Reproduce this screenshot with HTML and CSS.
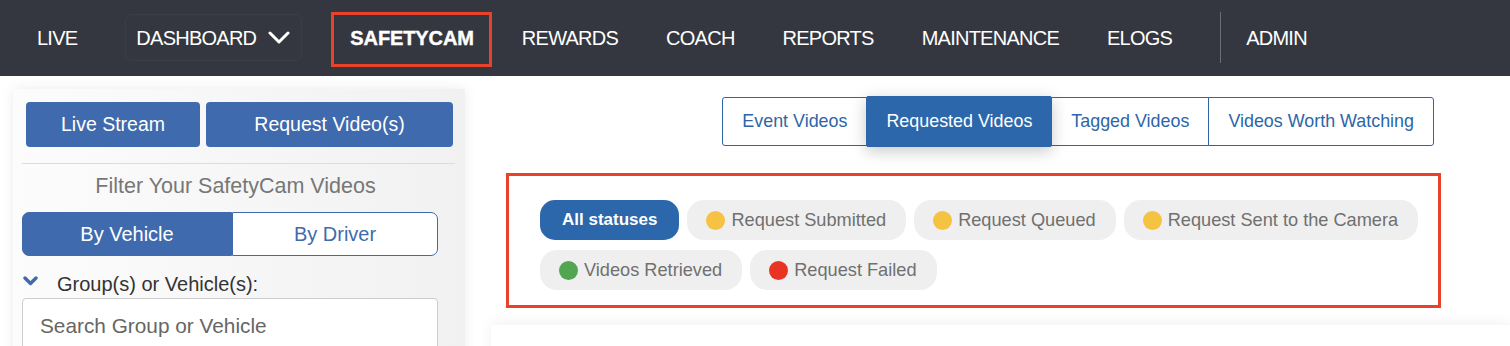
FILE: index.html
```html
<!DOCTYPE html>
<html lang="en">
<head>
  <meta charset="UTF-8" />
  <meta name="viewport" content="width=device-width, initial-scale=1.0"/>
  <title>SafetyCam - Requested Videos</title>
  <link rel="stylesheet" href="styles.css">
</head>
<body>

  <header class="topnav">
    <a class="nav-item">LIVE</a>
    <div class="nav-item nav-dropdown">
      DASHBOARD
      <svg class="nav-caret" width="22" height="13" viewBox="0 0 22 13">
        <path d="M2 2 L11 11 L20 2" fill="none" stroke="#fff" stroke-width="3" stroke-linecap="round" stroke-linejoin="round"/>
      </svg>
    </div>
    <a class="nav-item nav-active"><span class="highlight">SAFETYCAM</span></a>
    <a class="nav-item">REWARDS</a>
    <a class="nav-item">COACH</a>
    <a class="nav-item">REPORTS</a>
    <a class="nav-item">MAINTENANCE</a>
    <a class="nav-item">ELOGS</a>
    <span class="nav-divider"></span>
    <a class="nav-item">ADMIN</a>
  </header>

  <div class="layout">
    <aside class="sidebar">
      <div class="sidebar-actions">
        <button class="btn btn-live">Live Stream</button>
        <button class="btn btn-request">Request Video(s)</button>
      </div>
      <hr class="sidebar-rule">
      <h2 class="filter-title">Filter Your SafetyCam Videos</h2>
      <div class="toggle">
        <button class="toggle-opt active">By Vehicle</button>
        <button class="toggle-opt">By Driver</button>
      </div>
      <div class="field-label">
        <svg class="field-caret" width="15" height="10" viewBox="0 0 15 10">
          <path d="M2 2 L7.5 7.5 L13 2" fill="none" stroke="#3f6aad" stroke-width="3.4" stroke-linecap="round" stroke-linejoin="round"/>
        </svg>
        Group(s) or Vehicle(s):
      </div>
      <input type="text" class="search" placeholder="Search Group or Vehicle">
    </aside>

    <main class="content">
      <nav class="video-tabs">
        <a class="tab tab-first">Event Videos</a>
        <a class="tab active">Requested Videos</a>
        <a class="tab">Tagged Videos</a>
        <a class="tab tab-last">Videos Worth Watching</a>
      </nav>

      <section class="status-filter">
        <div class="chip-row">
          <button class="chip chip-all">All statuses</button>
          <button class="chip"><span class="dot dot-yellow"></span>Request Submitted</button>
          <button class="chip"><span class="dot dot-yellow"></span>Request Queued</button>
          <button class="chip"><span class="dot dot-yellow"></span>Request Sent to the Camera</button>
        </div>
        <div class="chip-row">
          <button class="chip"><span class="dot dot-green"></span>Videos Retrieved</button>
          <button class="chip"><span class="dot dot-red"></span>Request Failed</button>
        </div>
      </section>

      <div class="results-card"></div>
    </main>
  </div>

</body>
</html>
```

FILE: styles.css
```css
* {
  box-sizing: border-box;
}

html, body {
  overflow: hidden;
}

body {
  margin: 0;
  padding: 0;
  font-family: 'Liberation Sans', Arial, sans-serif;
  background: #fff;
}

button {
  font-family: inherit;
  cursor: pointer;
}

/* top navigation */
.topnav {
  display: flex;
  align-items: center;
  gap: 48px;
  height: 76px;
  padding-left: 37px;
  background: #353740;
}

.nav-item {
  color: #fff;
  font-size: 20px;
  letter-spacing: -0.75px;
  line-height: 24px;
  text-decoration: none;
}

.nav-dropdown {
  display: flex;
  align-items: center;
  gap: 12px;
  height: 47px;
  padding: 0 11px 0 10px;
  border: 1px solid rgba(255,255,255,0.035);
  border-radius: 7px;
  margin-top: -1px;
}

.nav-active {
  font-weight: bold;
  letter-spacing: -0.1px;
  -webkit-text-stroke: 0.4px #fff;
}

.highlight {
  position: relative;
  display: inline-block;
}

.highlight::after {
  content: "";
  position: absolute;
  top: -14px;
  bottom: -17px;
  left: -19px;
  right: -18px;
  border: 3px solid #e8422b;
}

.nav-divider {
  width: 1px;
  height: 51px;
  background: #6c6e75;
  margin-right: -23px;
  margin-top: -1px;
}

/* layout */
.layout {
  display: flex;
  align-items: flex-start;
}

.sidebar {
  flex-shrink: 0;
  width: 452px;
  min-height: 300px;
  margin: 13px 0 0 13px;
  padding: 13px 10px 0 9px;
  background: linear-gradient(90deg, #fcfcfc, #f1f1f1);
  box-shadow: 0 0 12px rgba(0,0,0,0.08);
}

.sidebar-actions {
  display: flex;
  gap: 6px;
  margin: 0 2px 0 4px;
}

.btn {
  height: 45px;
  border: none;
  border-radius: 4px;
  background: #3f6aad;
  color: #fff;
  font-size: 19.5px;
}

.btn-live {
  width: 174px;
}

.btn-request {
  flex: 1;
}

.sidebar-rule {
  border: none;
  border-top: 1px solid #dcdcdc;
  margin: 16px 0 0;
}

.filter-title {
  margin: 10px 0 0;
  text-align: center;
  font-size: 21.5px;
  font-weight: normal;
  line-height: 24px;
  color: #777;
  padding-right: 6px;
}

.toggle {
  display: flex;
  height: 44px;
  margin: 14px 17px 0 0;
}

.toggle-opt {
  flex: 1;
  border: 1px solid #3f6aad;
  background: #fff;
  color: #3f6aad;
  font-size: 20px;
  border-radius: 0 7px 7px 0;
}

.toggle-opt.active {
  flex: 0 0 210px;
  background: #3f6aad;
  color: #fff;
  border-radius: 7px 0 0 7px;
}

.field-label {
  display: flex;
  align-items: center;
  gap: 19px;
  margin-top: 16px;
  padding-left: 1px;
  font-size: 20px;
  line-height: 24px;
  color: #333;
}

.field-caret {
  margin-top: -6px;
}

.search {
  display: block;
  width: 416px;
  height: 56px;
  margin-top: 2px;
  padding: 0 17px;
  border: 1px solid #ccc;
  border-radius: 4px;
  background: #fff;
  font-family: inherit;
  font-size: 20.8px;
}

.search::placeholder {
  color: #666;
}

/* main content */
.content {
  flex: 1;
  min-width: 0;
  padding-top: 20px;
}

.video-tabs {
  display: flex;
  justify-content: flex-end;
  align-items: center;
  padding-right: 76px;
}

.tab {
  display: flex;
  align-items: center;
  height: 49px;
  padding: 0 19px;
  border: 1px solid #2d66a8;
  margin-left: -1px;
  background: #fff;
  color: #2d66a8;
  font-size: 17.9px;
  text-decoration: none;
}

.tab-first {
  border-radius: 3px 0 0 3px;
}

.tab-last {
  border-radius: 0 3px 3px 0;
}

.tab.active {
  position: relative;
  height: 51px;
  background: #2b67aa;
  color: #fff;
  border-radius: 2px;
  box-shadow: 0 4px 16px rgba(0,0,0,0.22);
}

.status-filter {
  display: flex;
  flex-direction: column;
  gap: 10px;
  margin: 26px 69px 0 41px;
  padding: 24px 20px 15px 31px;
  border: 3px solid #e8422b;
}

.chip-row {
  display: flex;
  gap: 8px;
}

.chip {
  display: flex;
  align-items: center;
  gap: 6px;
  height: 40px;
  padding: 0 20px 0 19px;
  border: none;
  border-radius: 17px;
  background: #efefef;
  color: #707070;
  font-size: 18.2px;
  white-space: nowrap;
}

.chip-all {
  padding: 0 22px;
  border-radius: 15px;
  background: #2b67aa;
  color: #fff;
  font-size: 17px;
  font-weight: bold;
}

.dot {
  width: 19px;
  height: 19px;
  border-radius: 50%;
  flex-shrink: 0;
}

.dot-yellow {
  background: #f6c244;
}

.dot-green {
  background: #53a552;
}

.dot-red {
  background: #e93323;
}

.results-card {
  height: 120px;
  margin: 17px 0 0 26px;
  background: #fff;
  box-shadow: 0 -2px 12px rgba(0,0,0,0.06);
}
```
